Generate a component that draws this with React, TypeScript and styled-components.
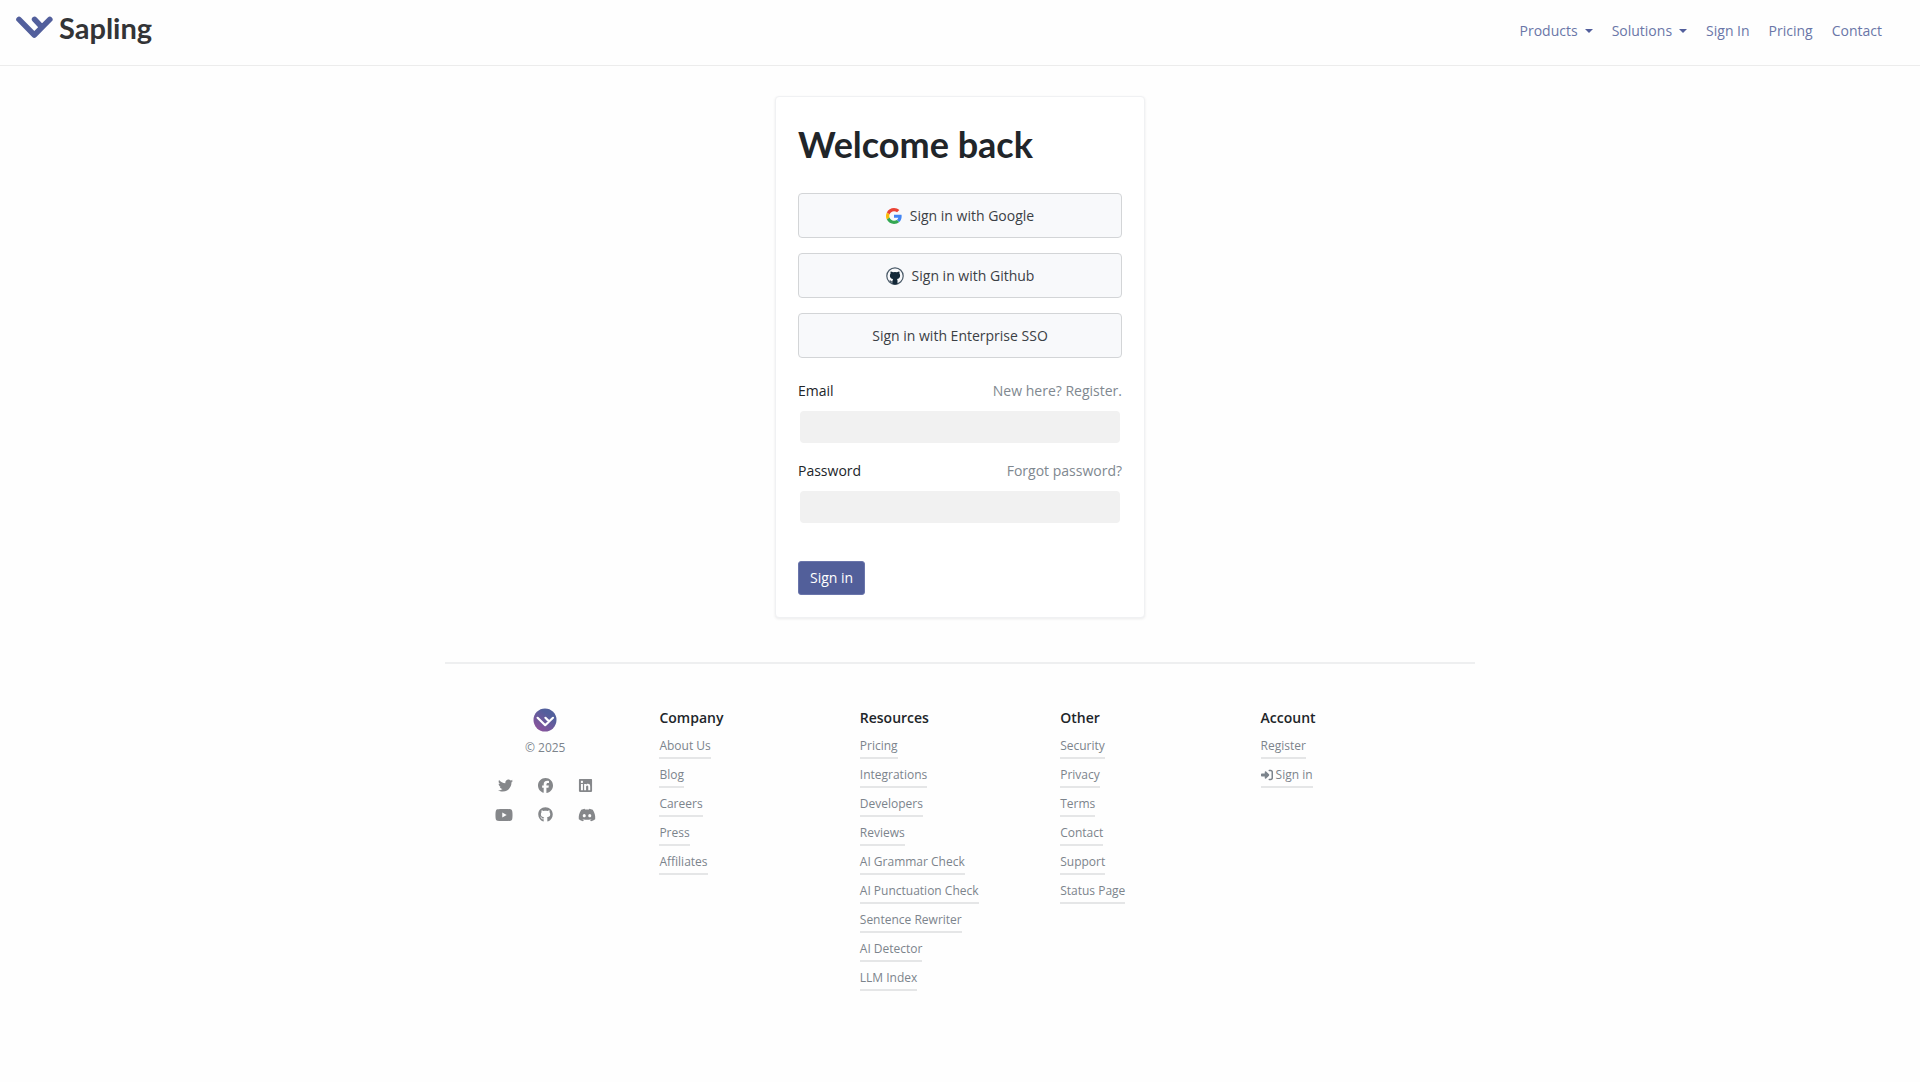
import React from "react";
import styled, { createGlobalStyle } from "styled-components";
import { FaTwitter, FaFacebook, FaLinkedin, FaYoutube, FaGithub, FaDiscord, FaRightToBracket } from "react-icons/fa6";

const GlobalStyle = createGlobalStyle`
  *, *::before, *::after { box-sizing: border-box; }
  body {
    margin: 0;
    background: #fefefe;
    color: #212529;
    font-family: "Open Sans", "Noto Sans", sans-serif;
    font-size: 14px;
    line-height: 24px;
  }
  a { color: inherit; text-decoration: none; }
`;

const Header = styled.header`
  display: flex;
  justify-content: space-between;
  align-items: center;
  height: 66px;
  padding: 0 30px 4px 16px;
  border-bottom: 1px solid #ececec;
`;

const Brand = styled.a`
  display: flex;
  align-items: center;
  gap: 6px;
  padding-bottom: 6px;
  color: #333436;
  font-family: Lato, sans-serif;
  font-size: 29px;
  font-weight: 700;
  line-height: 36px;
`;

const Nav = styled.nav`
  display: flex;
  align-items: center;
  gap: 3px;
`;

const NavLink = styled.a`
  padding: 8px;
  color: #6a76a8;
  white-space: nowrap;
`;

const NavMenu = styled.button`
  display: flex;
  align-items: center;
  gap: 7px;
  padding: 8px;
  border: 0;
  background: none;
  color: #6a76a8;
  font: inherit;
  cursor: pointer;

  &::after {
    content: "";
    border-top: 4px solid #525f9c;
    border-left: 4px solid transparent;
    border-right: 4px solid transparent;
  }
`;

const Card = styled.main`
  width: 370px;
  max-width: 100%;
  margin: 30px auto 0;
  padding: 22px;
  border: 1px solid #f0f1f3;
  border-radius: 4px;
  background: #fff;
  box-shadow: 0 1px 3px rgba(0, 0, 0, 0.08);
`;

const Title = styled.h1`
  margin: 3px 0 27px;
  font-family: Lato, sans-serif;
  font-size: 36px;
  font-weight: 700;
  line-height: 44px;
`;

const Providers = styled.div`
  display: flex;
  flex-direction: column;
  gap: 15px;
  margin-bottom: 21px;
`;

const ProviderButton = styled.button`
  display: flex;
  align-items: center;
  justify-content: center;
  gap: 8px;
  height: 45px;
  border: 1px solid #d3d5d7;
  border-radius: 4px;
  background: #f8f9fb;
  color: #3b4045;
  font: inherit;
  cursor: pointer;
`;

const Field = styled.div`
  display: grid;
  grid-template-columns: 1fr auto;
  row-gap: 8px;
  margin-bottom: 16px;
`;

const Hint = styled.a`
  color: #808890;
`;

const TextInput = styled.input`
  grid-column: 1 / -1;
  height: 32px;
  margin: 0 2px;
  padding: 0 8px;
  border: 0;
  border-radius: 4px;
  background: #f1f1f1;
  font: inherit;
`;

const Submit = styled.button`
  display: block;
  height: 34px;
  margin-top: 38px;
  padding: 0 11px;
  border: 1px solid #6a75ab;
  border-radius: 3px;
  background: #525f9a;
  color: #fff;
  font: inherit;
  cursor: pointer;
`;

const Footer = styled.footer`
  display: grid;
  grid-template-columns: repeat(5, 1fr);
  max-width: 1030px;
  margin: 44px auto 0;
  padding: 42px 28px 60px 0;
  border-top: 2px solid #eeeff0;
`;

const About = styled.div`
  display: flex;
  flex-direction: column;
  align-items: center;
  padding-top: 2px;
  color: #7c848c;
  font-size: 12px;
`;

const Copyright = styled.div`
  margin: 4px 0 18px;
`;

const Social = styled.div`
  display: flex;
  flex-wrap: wrap;
  justify-content: center;
  gap: 14px 25px;
  width: 110px;
  color: #85878a;
`;

const SocialLink = styled.a<{ $size: number }>`
  display: flex;
  align-items: center;
  height: 15px;
  font-size: ${({ $size }) => $size}px;
`;

const Column = styled.div`
  padding-left: 14px;
`;

const ColumnTitle = styled.h2`
  margin: 0 0 5px;
  font-size: 14px;
  font-weight: 600;
  line-height: 24px;
`;

const LinkList = styled.ul`
  display: grid;
  justify-items: start;
  row-gap: 5px;
  margin: 0;
  padding: 0;
  list-style: none;
`;

const FooterLink = styled.a`
  display: flex;
  align-items: center;
  gap: 3px;
  border-bottom: 2px solid #e5e6e7;
  color: #7c848c;
  font-size: 12px;
  line-height: 22px;
  white-space: nowrap;
`;

const Mark = () => (
  <svg width="37" height="23" viewBox="0 0 37 23" fill="none" stroke="#525f9c" strokeWidth="5.6" strokeLinecap="round" strokeLinejoin="round" aria-hidden="true">
    <path d="M3 3.4 18.3 19 33.8 3.4M18.6 3.4 25.6 10.8" />
  </svg>
);

const Badge = () => (
  <svg width="24" height="24" viewBox="0 0 24 24" fill="none" aria-hidden="true">
    <defs>
      <linearGradient id="badge" x1="3" y1="22" x2="15" y2="6" gradientUnits="userSpaceOnUse">
        <stop stopColor="#8f529c" />
        <stop offset="1" stopColor="#525f9c" />
      </linearGradient>
    </defs>
    <circle cx="12" cy="12" r="11.5" fill="url(#badge)" />
    <path d="M4.6 9.8 12.2 17.2 20 9.8M12.4 9.8 16 13.4" stroke="#fff" strokeWidth="2.2" strokeLinecap="round" strokeLinejoin="round" />
  </svg>
);

const GoogleIcon = () => (
  <svg width="16" height="16" viewBox="0 0 48 48" aria-hidden="true">
    <path fill="#EA4335" d="M24 9.5c3.54 0 6.71 1.22 9.21 3.6l6.85-6.85C35.9 2.38 30.47 0 24 0 14.62 0 6.51 5.38 2.56 13.22l7.98 6.19C12.43 13.72 17.74 9.5 24 9.5z" />
    <path fill="#4285F4" d="M46.98 24.55c0-1.57-.15-3.09-.38-4.55H24v9.02h12.94c-.58 2.96-2.26 5.48-4.78 7.18l7.73 6c4.51-4.18 7.09-10.36 7.09-17.65z" />
    <path fill="#FBBC05" d="M10.53 28.59c-.48-1.45-.76-2.99-.76-4.59s.27-3.14.76-4.59l-7.98-6.19C.92 16.46 0 20.12 0 24c0 3.88.92 7.54 2.56 10.78l7.97-6.19z" />
    <path fill="#34A853" d="M24 48c6.48 0 11.93-2.13 15.89-5.81l-7.73-6c-2.15 1.45-4.92 2.3-8.16 2.3-6.26 0-11.57-4.22-13.47-9.91l-7.98 6.19C6.51 42.62 14.62 48 24 48z" />
  </svg>
);

const GithubIcon = () => (
  <svg width="18" height="18" viewBox="0 0 18 18" aria-hidden="true">
    <circle cx="9" cy="9" r="8.2" fill="none" stroke="#4a5a68" strokeWidth="1.2" />
    <path fill="#132838" d="M4.7 4.4c.9 0 1.7.4 2.3.9a8 8 0 0 1 4 0c.6-.5 1.4-.9 2.3-.9.3.8.3 1.5.1 2.1.5.6.7 1.3.7 2.1 0 2.3-1.3 3.2-3.1 3.5.4.4.5.9.5 1.5v3.7a8.5 8.5 0 0 1-5 0v-1.9c-1.5.3-2.1-.5-2.5-1.3-.2-.4-.5-.7-.8-.9.9-.2 1.5.3 1.9.9.3.5.7.7 1.4.5 0-.9.2-1.6.5-2.5-1.8-.3-3.1-1.2-3.1-3.5 0-.8.2-1.5.7-2.1-.2-.6-.2-1.3.1-2.1z" />
  </svg>
);

const socials = [
  { name: "Twitter", Icon: FaTwitter, size: 15 },
  { name: "Facebook", Icon: FaFacebook, size: 15 },
  { name: "LinkedIn", Icon: FaLinkedin, size: 15 },
  { name: "YouTube", Icon: FaYoutube, size: 18 },
  { name: "GitHub", Icon: FaGithub, size: 15 },
  { name: "Discord", Icon: FaDiscord, size: 18 },
];

const columns = [
  { title: "Company", links: ["About Us", "Blog", "Careers", "Press", "Affiliates"] },
  {
    title: "Resources",
    links: ["Pricing", "Integrations", "Developers", "Reviews", "AI Grammar Check", "AI Punctuation Check", "Sentence Rewriter", "AI Detector", "LLM Index"],
  },
  { title: "Other", links: ["Security", "Privacy", "Terms", "Contact", "Support", "Status Page"] },
  { title: "Account", links: ["Register", "Sign in"] },
];

export default function App() {
  return (
    <>
      <GlobalStyle />
      <Header>
        <Brand href="#"><Mark />Sapling</Brand>
        <Nav>
          <NavMenu type="button">Products</NavMenu>
          <NavMenu type="button">Solutions</NavMenu>
          <NavLink href="#">Sign In</NavLink>
          <NavLink href="#">Pricing</NavLink>
          <NavLink href="#">Contact</NavLink>
        </Nav>
      </Header>
      <Card>
        <Title>Welcome back</Title>
        <Providers>
          <ProviderButton type="button"><GoogleIcon />Sign in with Google</ProviderButton>
          <ProviderButton type="button"><GithubIcon />Sign in with Github</ProviderButton>
          <ProviderButton type="button">Sign in with Enterprise SSO</ProviderButton>
        </Providers>
        <form onSubmit={(event) => event.preventDefault()}>
          <Field>
            <label htmlFor="email">Email</label>
            <Hint href="#">New here? Register.</Hint>
            <TextInput id="email" type="email" />
          </Field>
          <Field>
            <label htmlFor="password">Password</label>
            <Hint href="#">Forgot password?</Hint>
            <TextInput id="password" type="password" />
          </Field>
          <Submit type="submit">Sign in</Submit>
        </form>
      </Card>
      <Footer>
        <About>
          <Badge />
          <Copyright>© 2025</Copyright>
          <Social>
            {socials.map(({ name, Icon, size }) => (
              <SocialLink key={name} href="#" aria-label={name} $size={size}><Icon /></SocialLink>
            ))}
          </Social>
        </About>
        {columns.map(({ title, links }) => (
          <Column key={title}>
            <ColumnTitle>{title}</ColumnTitle>
            <LinkList>
              {links.map((link) => (
                <li key={link}>
                  <FooterLink href="#">{link === "Sign in" && <FaRightToBracket />}{link}</FooterLink>
                </li>
              ))}
            </LinkList>
          </Column>
        ))}
      </Footer>
    </>
  );
}
